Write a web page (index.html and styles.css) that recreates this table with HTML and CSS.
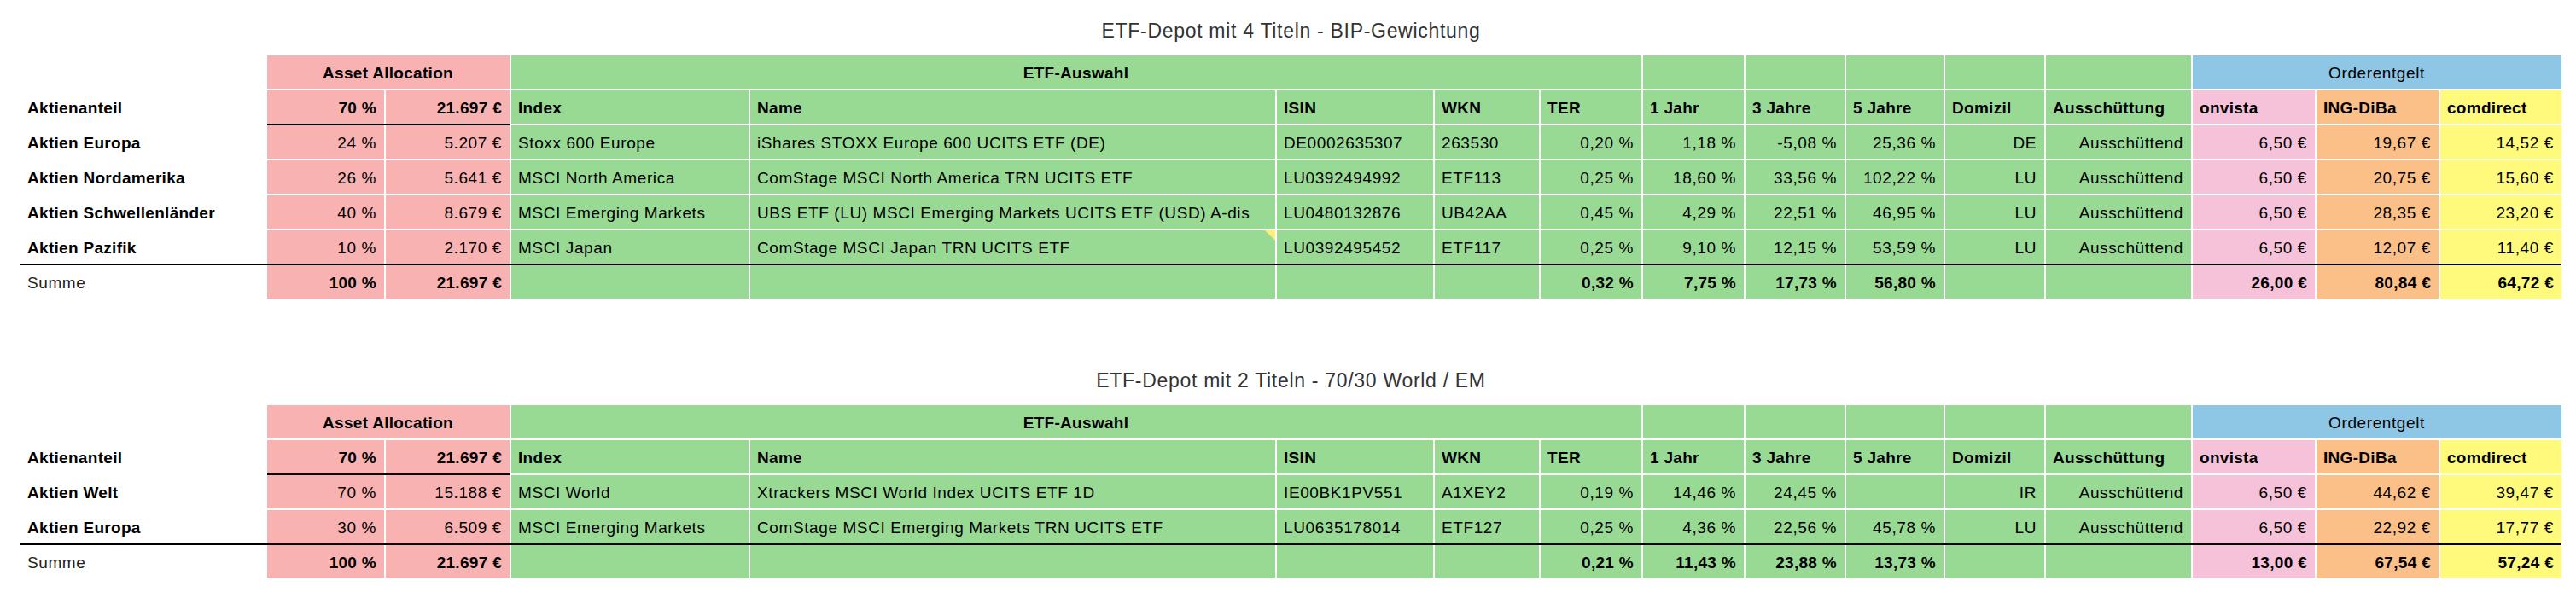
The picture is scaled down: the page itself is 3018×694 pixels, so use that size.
FILE: index.html
```html
<!DOCTYPE html>
<html lang="de">
<head>
<meta charset="utf-8">
<title>ETF-Depot</title>
<link rel="stylesheet" href="styles.css">
</head>
<body>
<main class="page">

<section class="sheet">
  <h2 class="sheet-title">ETF-Depot mit 4 Titeln - BIP-Gewichtung</h2>
  <div class="grid">
    <div class="cell lbl"></div>
    <div class="cell aa b ctr span-aa">Asset Allocation</div>
    <div class="cell gr b ctr span-etf">ETF-Auswahl</div>
    <div class="cell gr"></div><div class="cell gr"></div><div class="cell gr"></div><div class="cell gr"></div><div class="cell gr"></div>
    <div class="cell bl ctr span-order">Orderentgelt</div>
    <div class="sep"></div>

    <div class="cell lbl b">Aktienanteil</div>
    <div class="cell aa b num">70 %</div><div class="cell aa b num">21.697 €</div>
    <div class="cell gr b">Index</div><div class="cell gr b">Name</div><div class="cell gr b">ISIN</div><div class="cell gr b">WKN</div><div class="cell gr b">TER</div>
    <div class="cell gr b">1 Jahr</div><div class="cell gr b">3 Jahre</div><div class="cell gr b">5 Jahre</div><div class="cell gr b">Domizil</div><div class="cell gr b">Ausschüttung</div>
    <div class="cell on b">onvista</div><div class="cell ing b">ING-DiBa</div><div class="cell cd b">comdirect</div>
    <div class="sep-aa"></div><div class="sep-rest"></div>

    <div class="cell lbl b">Aktien Europa</div>
    <div class="cell aa num">24 %</div><div class="cell aa num">5.207 €</div>
    <div class="cell gr">Stoxx 600 Europe</div><div class="cell gr">iShares STOXX Europe 600 UCITS ETF (DE)</div><div class="cell gr">DE0002635307</div><div class="cell gr">263530</div><div class="cell gr num">0,20 %</div>
    <div class="cell gr num">1,18 %</div><div class="cell gr num">-5,08 %</div><div class="cell gr num">25,36 %</div><div class="cell gr num">DE</div><div class="cell gr num">Ausschüttend</div>
    <div class="cell on num">6,50 €</div><div class="cell ing num">19,67 €</div><div class="cell cd num">14,52 €</div>
    <div class="sep"></div>

    <div class="cell lbl b">Aktien Nordamerika</div>
    <div class="cell aa num">26 %</div><div class="cell aa num">5.641 €</div>
    <div class="cell gr">MSCI North America</div><div class="cell gr">ComStage MSCI North America TRN UCITS ETF</div><div class="cell gr">LU0392494992</div><div class="cell gr">ETF113</div><div class="cell gr num">0,25 %</div>
    <div class="cell gr num">18,60 %</div><div class="cell gr num">33,56 %</div><div class="cell gr num">102,22 %</div><div class="cell gr num">LU</div><div class="cell gr num">Ausschüttend</div>
    <div class="cell on num">6,50 €</div><div class="cell ing num">20,75 €</div><div class="cell cd num">15,60 €</div>
    <div class="sep"></div>

    <div class="cell lbl b">Aktien Schwellenländer</div>
    <div class="cell aa num">40 %</div><div class="cell aa num">8.679 €</div>
    <div class="cell gr">MSCI Emerging Markets</div><div class="cell gr">UBS ETF (LU) MSCI Emerging Markets UCITS ETF (USD) A-dis</div><div class="cell gr">LU0480132876</div><div class="cell gr">UB42AA</div><div class="cell gr num">0,45 %</div>
    <div class="cell gr num">4,29 %</div><div class="cell gr num">22,51 %</div><div class="cell gr num">46,95 %</div><div class="cell gr num">LU</div><div class="cell gr num">Ausschüttend</div>
    <div class="cell on num">6,50 €</div><div class="cell ing num">28,35 €</div><div class="cell cd num">23,20 €</div>
    <div class="sep"></div>

    <div class="cell lbl b">Aktien Pazifik</div>
    <div class="cell aa num">10 %</div><div class="cell aa num">2.170 €</div>
    <div class="cell gr">MSCI Japan</div><div class="cell gr note">ComStage MSCI Japan TRN UCITS ETF</div><div class="cell gr">LU0392495452</div><div class="cell gr">ETF117</div><div class="cell gr num">0,25 %</div>
    <div class="cell gr num">9,10 %</div><div class="cell gr num">12,15 %</div><div class="cell gr num">53,59 %</div><div class="cell gr num">LU</div><div class="cell gr num">Ausschüttend</div>
    <div class="cell on num">6,50 €</div><div class="cell ing num">12,07 €</div><div class="cell cd num">11,40 €</div>
    <div class="sep sep-black"></div>

    <div class="cell lbl sum">Summe</div>
    <div class="cell aa b num">100 %</div><div class="cell aa b num">21.697 €</div>
    <div class="cell gr"></div><div class="cell gr"></div><div class="cell gr"></div><div class="cell gr"></div><div class="cell gr b num">0,32 %</div>
    <div class="cell gr b num">7,75 %</div><div class="cell gr b num">17,73 %</div><div class="cell gr b num">56,80 %</div><div class="cell gr"></div><div class="cell gr"></div>
    <div class="cell on b num">26,00 €</div><div class="cell ing b num">80,84 €</div><div class="cell cd b num">64,72 €</div>
  </div>
</section>

<section class="sheet">
  <h2 class="sheet-title">ETF-Depot mit 2 Titeln - 70/30 World / EM</h2>
  <div class="grid">
    <div class="cell lbl"></div>
    <div class="cell aa b ctr span-aa">Asset Allocation</div>
    <div class="cell gr b ctr span-etf">ETF-Auswahl</div>
    <div class="cell gr"></div><div class="cell gr"></div><div class="cell gr"></div><div class="cell gr"></div><div class="cell gr"></div>
    <div class="cell bl ctr span-order">Orderentgelt</div>
    <div class="sep"></div>

    <div class="cell lbl b">Aktienanteil</div>
    <div class="cell aa b num">70 %</div><div class="cell aa b num">21.697 €</div>
    <div class="cell gr b">Index</div><div class="cell gr b">Name</div><div class="cell gr b">ISIN</div><div class="cell gr b">WKN</div><div class="cell gr b">TER</div>
    <div class="cell gr b">1 Jahr</div><div class="cell gr b">3 Jahre</div><div class="cell gr b">5 Jahre</div><div class="cell gr b">Domizil</div><div class="cell gr b">Ausschüttung</div>
    <div class="cell on b">onvista</div><div class="cell ing b">ING-DiBa</div><div class="cell cd b">comdirect</div>
    <div class="sep-aa"></div><div class="sep-rest"></div>

    <div class="cell lbl b">Aktien Welt</div>
    <div class="cell aa num">70 %</div><div class="cell aa num">15.188 €</div>
    <div class="cell gr">MSCI World</div><div class="cell gr">Xtrackers MSCI World Index UCITS ETF 1D</div><div class="cell gr">IE00BK1PV551</div><div class="cell gr">A1XEY2</div><div class="cell gr num">0,19 %</div>
    <div class="cell gr num">14,46 %</div><div class="cell gr num">24,45 %</div><div class="cell gr num"></div><div class="cell gr num">IR</div><div class="cell gr num">Ausschüttend</div>
    <div class="cell on num">6,50 €</div><div class="cell ing num">44,62 €</div><div class="cell cd num">39,47 €</div>
    <div class="sep"></div>

    <div class="cell lbl b">Aktien Europa</div>
    <div class="cell aa num">30 %</div><div class="cell aa num">6.509 €</div>
    <div class="cell gr">MSCI Emerging Markets</div><div class="cell gr">ComStage MSCI Emerging Markets TRN UCITS ETF</div><div class="cell gr">LU0635178014</div><div class="cell gr">ETF127</div><div class="cell gr num">0,25 %</div>
    <div class="cell gr num">4,36 %</div><div class="cell gr num">22,56 %</div><div class="cell gr num">45,78 %</div><div class="cell gr num">LU</div><div class="cell gr num">Ausschüttend</div>
    <div class="cell on num">6,50 €</div><div class="cell ing num">22,92 €</div><div class="cell cd num">17,77 €</div>
    <div class="sep sep-black"></div>

    <div class="cell lbl sum">Summe</div>
    <div class="cell aa b num">100 %</div><div class="cell aa b num">21.697 €</div>
    <div class="cell gr"></div><div class="cell gr"></div><div class="cell gr"></div><div class="cell gr"></div><div class="cell gr b num">0,21 %</div>
    <div class="cell gr b num">11,43 %</div><div class="cell gr b num">23,88 %</div><div class="cell gr b num">13,73 %</div><div class="cell gr"></div><div class="cell gr"></div>
    <div class="cell on b num">13,00 €</div><div class="cell ing b num">67,54 €</div><div class="cell cd b num">57,24 €</div>
  </div>
</section>

</main>
</body>
</html>
```

FILE: styles.css
```css
* { box-sizing: border-box; }

body {
  margin: 0;
  background: #fff;
  color: #000;
  font-family: "Liberation Sans", Arial, Helvetica, sans-serif;
}

.page {
  width: 3018px;
  padding: 21px 17px 0 24px;
}

.sheet + .sheet { margin-top: 81px; }

.sheet-title {
  margin: 0 0 14px;
  height: 30px;
  line-height: 30px;
  font-size: 23px;
  letter-spacing: 0.7px;
  font-weight: normal;
  text-align: center;
  color: #333;
}

.grid {
  display: grid;
  grid-template-columns: 287px 137px 145px 278px 615px 183px 122px 118px 118px 116px 114px 116px 170px 143px 143px 142px;
  column-gap: 2px;
  font-size: 19px;
  letter-spacing: 0.6px;
}

.cell {
  height: 39px;
  line-height: 37px;
  padding: 2px 9px 0 8px;
  white-space: nowrap;
  overflow: hidden;
}

.sep { grid-column: 1 / -1; height: 2px; }
.sep-black { background: #000; }
.sep-aa { grid-column: 2 / 4; height: 2px; background: #000; }
.sep-rest { grid-column: 4 / -1; height: 2px; }

.span-aa { grid-column: span 2; }
.span-etf { grid-column: span 5; }
.span-order { grid-column: span 3; }

.lbl { background: #fff; }
.aa { background: #f8b2b2; }
.gr { background: #98da94; }
.bl { background: #8ec6e6; }
.on { background: #f5c2d9; }
.ing { background: #fac088; }
.cd { background: #fffa7b; }

.b { font-weight: bold; letter-spacing: 0.3px; }
.num { text-align: right; }
.ctr { text-align: center; }
.sum { color: #222; }

.note { position: relative; }
.note::after {
  content: "";
  position: absolute;
  top: 0;
  right: 0;
  width: 0;
  height: 0;
  border-top: 12px solid #fbf07a;
  border-left: 12px solid transparent;
}
```
